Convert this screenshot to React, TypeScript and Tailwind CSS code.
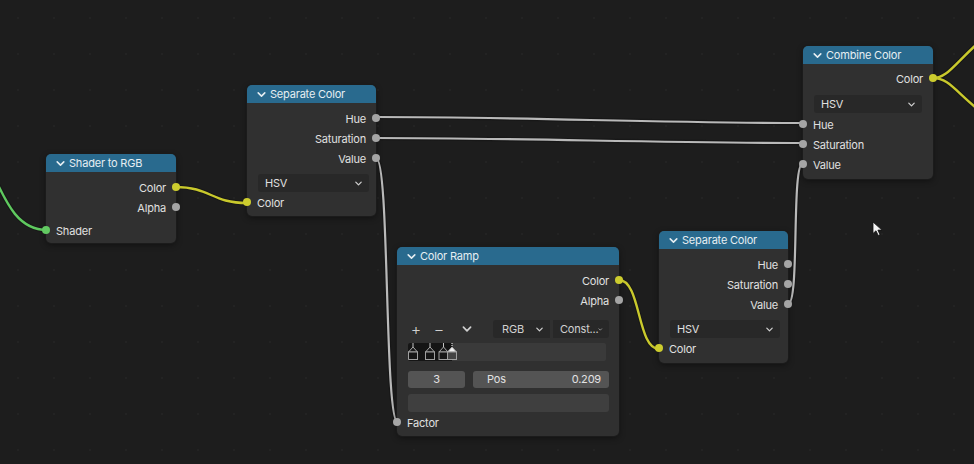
import type { ReactNode } from "react";

type SocketKind = "gray" | "yellow" | "green";

const socketColor: Record<SocketKind, string> = {
  gray: "bg-[#a5a5a5]",
  yellow: "bg-[#cccc2e]",
  green: "bg-[#62c962]",
};

function Chevron({ className = "" }: { className?: string }) {
  return (
    <svg viewBox="0 0 10 10" className={`w-[9px] h-[9px] ${className}`} fill="none">
      <path d="M2 3.5 L5 6.5 L8 3.5" stroke="currentColor" strokeWidth="1.4" strokeLinecap="round" strokeLinejoin="round" />
    </svg>
  );
}

function Socket({ side, kind }: { side: "in" | "out"; kind: SocketKind }) {
  return (
    <span
      className={`absolute top-1/2 -translate-y-1/2 w-[8px] h-[8px] rounded-full ${socketColor[kind]} ${
        side === "in" ? "left-[-4px]" : "right-[-4px]"
      }`}
    />
  );
}

function Out({ label, kind = "gray" }: { label: string; kind?: SocketKind }) {
  return (
    <div className="relative h-[20px] flex items-center justify-end pr-[10px]">
      <span className="translate-y-[1px]">{label}</span>
      <Socket side="out" kind={kind} />
    </div>
  );
}

function In({ label, kind = "gray" }: { label: string; kind?: SocketKind }) {
  return (
    <div className="relative h-[20px] flex items-center pl-[10px]">
      <span className="translate-y-[1px]">{label}</span>
      <Socket side="in" kind={kind} />
    </div>
  );
}

function Dropdown({ label, className = "" }: { label: string; className?: string }) {
  return (
    <div className={`h-[18px] rounded-[3px] bg-[#282828] flex items-center justify-between pl-[7px] pr-[6px] ${className}`}>
      <span>{label}</span>
      <Chevron className="text-[#cfcfcf]" />
    </div>
  );
}

function Node({ title, className, children }: { title: string; className: string; children: ReactNode }) {
  return (
    <div
      className={`absolute rounded-[5px] bg-[#303030] shadow-[0_0_0_1px_#1b1b1b,0_2px_6px_rgba(0,0,0,0.45)] text-[11px] tracking-[-0.2px] text-[#e0e0e0] ${className}`}
    >
      <div className="h-[18px] rounded-t-[5px] bg-[#296a8e] flex items-center gap-[3px] pl-[9px] text-[#e6eef2]">
        <Chevron className="w-[11px] h-[11px]" />
        <span>{title}</span>
      </div>
      {children}
    </div>
  );
}

function RampStop({ x, selected }: { x: number; selected?: boolean }) {
  return (
    <g transform={`translate(${x} 0)`}>
      <line x1="0" y1="0" x2="0" y2="4" stroke={selected ? "#ffffff" : "#c4c4c4"} strokeWidth="1" strokeDasharray={selected ? "1 1" : "0"} />
      <path d="M-4.5 9 L0 4 L4.5 9 Z" fill={selected ? "#f2f2f2" : "#1a1a1a"} stroke="#a8a8a8" strokeWidth="1" />
      <rect x="-4.5" y="9" width="9" height="7.5" fill={selected ? "#444444" : "#161616"} stroke="#a0a0a0" strokeWidth="1" />
    </g>
  );
}

function Wires() {
  const paths: { d: string; c: string; w: number }[] = [
    { d: "M-14 160 C 2 190, 12 230, 47 230", c: "#5fc95f", w: 2.4 },
    { d: "M175 187 C 211 187, 211 203, 247 203", c: "#c9c92c", w: 2.4 },
    { d: "M376 117 C 520 117, 660 123, 803 123", c: "#b9b9b9", w: 2.2 },
    { d: "M376 138 C 520 138, 660 143, 803 143", c: "#b9b9b9", w: 2.2 },
    { d: "M376 158 C 390 158, 384 423, 398 423", c: "#b9b9b9", w: 2.2 },
    { d: "M619 280 C 641 280, 637 349, 659 349", c: "#c9c92c", w: 2.4 },
    { d: "M788 304 C 800 304, 791 163, 803 163", c: "#b9b9b9", w: 2.2 },
    { d: "M933 78 C 950 78, 955 60, 1000 24", c: "#c9c92c", w: 2.4 },
    { d: "M933 78 C 952 78, 958 98, 1000 126", c: "#c9c92c", w: 2.4 },
  ];
  return (
    <svg className="absolute inset-0" width="974" height="464" fill="none" strokeLinecap="round">
      <g stroke="#141414" strokeWidth="4.5" opacity="0.6">
        {paths.map((p, i) => (
          <path key={i} d={p.d} />
        ))}
      </g>
      {paths.map((p, i) => (
        <path key={i} d={p.d} stroke={p.c} strokeWidth={p.w} />
      ))}
    </svg>
  );
}

export default function App() {
  return (
    <div className="relative w-[974px] h-[464px] overflow-hidden bg-[#1d1d1d] bg-[radial-gradient(circle,#232323_1px,transparent_1.2px)] bg-[size:36px_36px] font-['Inter','Liberation_Sans',sans-serif]">
      <Wires />

      <Node title="Shader to RGB" className="left-[46px] top-[154px] w-[130px] pb-[3px]">
        <div className="pt-[5px]">
          <Out label="Color" kind="yellow" />
          <Out label="Alpha" />
        </div>
        <div className="mt-[3px]">
          <In label="Shader" kind="green" />
        </div>
      </Node>

      <Node title="Separate Color" className="left-[247px] top-[85px] w-[129px] pb-[4px]">
        <div className="pt-[5px]">
          <Out label="Hue" />
          <Out label="Saturation" />
          <Out label="Value" />
        </div>
        <Dropdown label="HSV" className="mt-[6px] ml-[11px] mr-[7px]" />
        <In label="Color" kind="yellow" />
      </Node>

      <Node title="Color Ramp" className="left-[397px] top-[247px] w-[222px] pb-[4px]">
        <div className="pt-[5px]">
          <Out label="Color" kind="yellow" />
          <Out label="Alpha" />
        </div>
        <div className="mt-[10px] h-[18px] flex items-center pl-[11px] pr-[10px] text-[#d0d0d0]">
          <span className="w-[16px] text-center text-[16px] leading-none font-light">+</span>
          <span className="ml-[7px] w-[16px] text-center text-[16px] leading-none font-light">−</span>
          <span className="ml-[12px] w-[16px] flex justify-center">
            <Chevron className="w-[12px] h-[12px]" />
          </span>
          <Dropdown label="RGB" className="ml-[18px] w-[57px] rounded-r-none pl-[9px]" />
          <Dropdown label="Const..." className="ml-[3px] w-[56px] bg-[#2c2c2c] rounded-l-none pl-[4px]" />
        </div>
        <div className="mt-[5px] ml-[11px] mr-[13px] h-[18px] relative rounded-[2px] bg-[#3a3a3a] overflow-hidden">
          <div className="absolute left-0 top-0 h-full w-[44px] bg-[#151515]" />
          <svg className="absolute inset-0" width="198" height="18">
            <RampStop x={5} />
            <RampStop x={22} />
            <RampStop x={35.5} />
            <RampStop x={44} selected />
          </svg>
        </div>
        <div className="mt-[10px] ml-[11px] mr-[10px] h-[17px] flex gap-[8px] text-[#e2e2e2]">
          <div className="w-[57px] rounded-[3px] bg-[#545454] flex items-center justify-center">3</div>
          <div className="flex-1 rounded-[3px] bg-[#545454] flex items-center justify-between pl-[14px] pr-[8px]">
            <span>Pos</span>
            <span>0.209</span>
          </div>
        </div>
        <div className="mt-[6px] ml-[11px] mr-[10px] h-[18px] rounded-[3px] bg-[#3f3f3f]" />
        <In label="Factor" />
      </Node>

      <Node title="Separate Color" className="left-[659px] top-[231px] w-[129px] pb-[5px]">
        <div className="pt-[5px]">
          <Out label="Hue" />
          <Out label="Saturation" />
          <Out label="Value" />
        </div>
        <Dropdown label="HSV" className="mt-[6px] ml-[11px] mr-[8px]" />
        <In label="Color" kind="yellow" />
      </Node>

      <Node title="Combine Color" className="left-[803px] top-[46px] w-[130px] pb-[5px]">
        <div className="pt-[4px]">
          <Out label="Color" kind="yellow" />
        </div>
        <Dropdown label="HSV" className="mt-[7px] mb-[1px] ml-[11px] mr-[11px]" />
        <In label="Hue" />
        <In label="Saturation" />
        <In label="Value" />
      </Node>

      <svg className="absolute left-[872px] top-[221px]" width="12" height="16" viewBox="0 0 12 16">
        <path d="M1 1 L1 12.5 L4 9.8 L6.2 14.5 L8 13.7 L5.9 9.1 L10 9.1 Z" fill="#f4f4f4" stroke="#111" strokeWidth="0.8" />
      </svg>
    </div>
  );
}
